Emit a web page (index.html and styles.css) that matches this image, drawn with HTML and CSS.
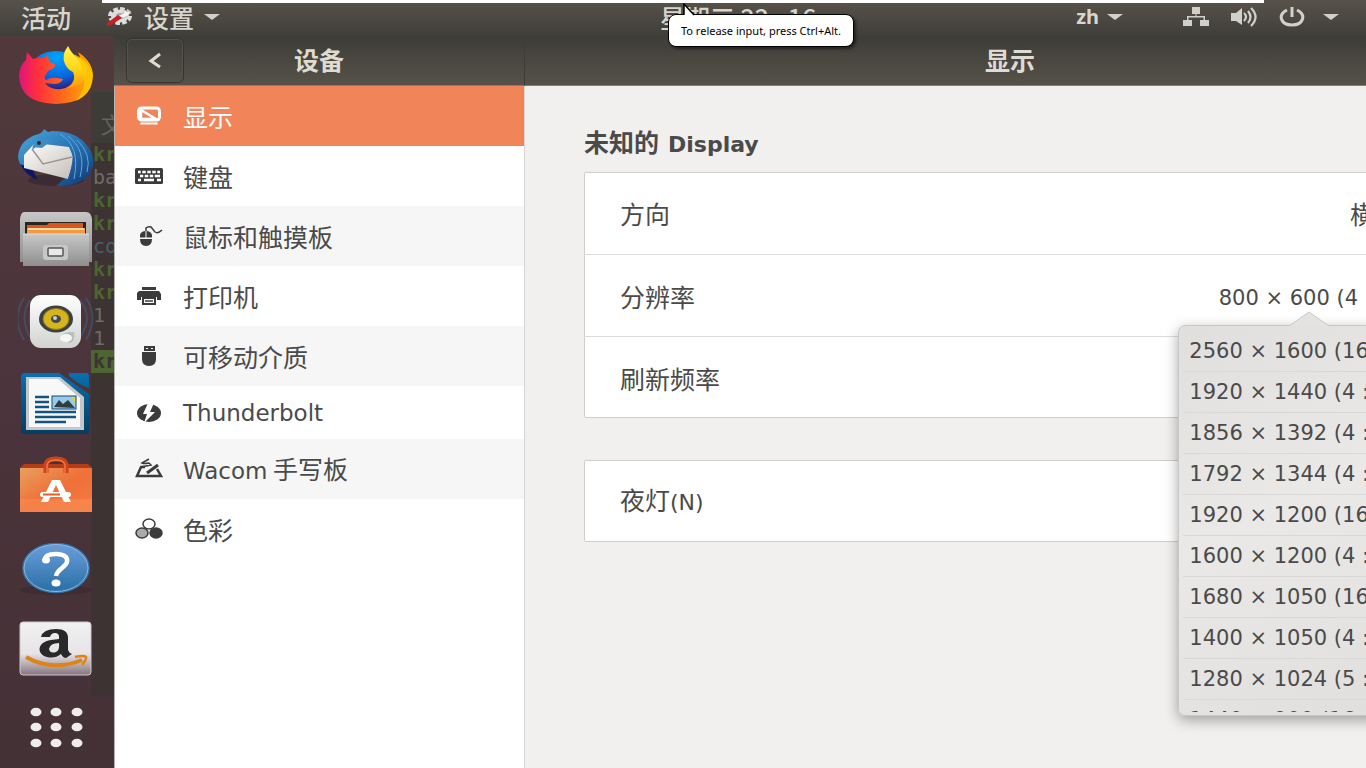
FILE: index.html
```html
<!DOCTYPE html>
<html lang="zh-CN">
<head>
<meta charset="utf-8">
<title>设置</title>
<link rel="stylesheet" href="styles.css">
</head>
<body>
<div class="desktop">
  <header class="topbar">
    <button class="activities">活动</button>
    <button class="app-menu">
      <svg width="28" height="20" viewBox="0 0 28 20"><ellipse cx="15" cy="9" rx="10" ry="7" fill="none" stroke="#dedede" stroke-width="4" stroke-dasharray="4.500 2.200"/><ellipse cx="15" cy="9" rx="9" ry="6.500" fill="#dedede"/><ellipse cx="15" cy="9" rx="4" ry="3" fill="#aaa8a4"/><path d="M13 9L19 6L19 2L22 5L26 4L23 9L18 11Z" fill="#f4f4f4" stroke="#999" stroke-width=".5"/><path d="M2 16L13 8L17 11L6 18Q1 20 2 16Z" fill="#c91f27"/></svg>
      <span>设置</span>
      <svg class="caret" width="16" height="8" viewBox="0 0 16 8"><path d="M0 1H16L8 7Z" fill="#d2d0ca"/></svg>
    </button>
    <time class="clock">星期三 22 : 16</time>
    <button class="lang"><span>zh</span><svg width="16" height="8" viewBox="0 0 16 8"><path d="M0 1H16L8 7Z" fill="#d2d0ca"/></svg></button>
    <button class="tray" aria-label="系统菜单">
      <svg width="26" height="20" viewBox="0 0 26 20" fill="#d2d0ca"><path d="M9 0H17V7H13.500V9H22V13H26V19H17V13H20.500V10.500H5.500V13H9V19H0V13H4V9H12.500V7H9Z"/></svg>
      <svg width="26" height="20" viewBox="0 0 26 20"><path d="M0 6H5L11 1V18L5 14H0Z" fill="#d2d0ca"/><path d="M13 6Q17 10 13 14M17 4Q22 10 17 16M20 1Q29 10 20 19" fill="none" stroke="#d2d0ca" stroke-width="2.2"/></svg>
      <svg width="26" height="20" viewBox="0 0 26 20"><path d="M8 3C-2 8 2 18 13 18S28 8 18 3M13 0V10" fill="none" stroke="#d2d0ca" stroke-width="3"/></svg>
      <svg class="caret" width="16" height="20" viewBox="0 0 16 20"><path d="M0 7H16L8 13Z" fill="#d2d0ca"/></svg>
    </button>
    <div class="host-edge"></div>
  </header>

  <div class="workspace">
    <div class="terminal" aria-hidden="true">
      <div class="terminal-bar">文</div>
      <div class="terminal-body">
        <b>kr</b><i>ba</i><b>kr</b><b>kr</b><i class="blue">co</i><b>kr</b><b>kr</b><i>1</i><i>1</i><b class="mark">kr</b>
      </div>
    </div>

    <nav class="dock" aria-label="Dock">
      <button aria-label="Firefox"><svg width="76" height="78" viewBox="0 0 76 78">
        <defs><radialGradient id="fb" cx=".5" cy=".15" r=".85"><stop offset="0" stop-color="#00a5fb"/><stop offset=".6" stop-color="#0867e0"/><stop offset="1" stop-color="#35146b"/></radialGradient><linearGradient id="fy" x1="0" y1="0" x2="0" y2="1"><stop offset="0" stop-color="#fff44f"/><stop offset=".5" stop-color="#ffd91c"/><stop offset="1" stop-color="#ff9b00"/></linearGradient><linearGradient id="fr" x1="0" y1="0" x2="1" y2="0"><stop offset="0" stop-color="#e0147c"/><stop offset=".25" stop-color="#ff2f3c"/><stop offset=".6" stop-color="#ff6a1c"/><stop offset="1" stop-color="#ffb400"/></linearGradient></defs>
        <ellipse cx="38" cy="34" rx="26" ry="20" fill="url(#fb)"/>
        <path d="M9 15L15 22Q20 20 25 21L30 18Q30 23 33 26L37 27Q38 31 30 34L28 37Q25 41 28 43Q33 40 39 41L45 42Q43 47 36 47L27 46Q32 53 43 52Q55 50 57 40Q57 33 53 28L62 20L60 15Q75 25 75 39Q74 66 38 67Q2 66 1 39Q1 29 8 23Z" fill="url(#fr)"/>
        <path d="M50 9Q43 18 47 27Q49 32 55 35Q59 43 50 51Q65 50 69 37Q70 28 62 22Q54 18 50 9Z" fill="url(#fy)"/><path d="M55 17Q70 22 74 37Q76 55 58 64Q70 50 65 34Q62 24 55 17Z" fill="#ffc800" opacity=".8"/></svg></button>
      <button aria-label="Thunderbird"><svg width="76" height="78" viewBox="0 0 76 78">
        <defs><linearGradient id="tb" x1="0" y1="0" x2="1" y2="1"><stop offset="0" stop-color="#4da6d8"/><stop offset=".5" stop-color="#2875b8"/><stop offset="1" stop-color="#103674"/></linearGradient><linearGradient id="te" x1="0" y1="0" x2="1" y2="1"><stop offset="0" stop-color="#fff"/><stop offset="1" stop-color="#c3beb5"/></linearGradient></defs>
        <ellipse cx="38" cy="61" rx="28" ry="6" fill="#30232a" opacity=".6"/>
        <path d="M17 16Q24 15 26 10L30 13Q50 10 64 21Q79 35 74 50Q66 65 38 67L48 58L12 48L20 61Q2 53 0 38Q1 22 17 16Z" fill="url(#tb)"/><path d="M2 45Q8 57 20 61L15 51L7 47Z" fill="#11175d"/>
        <path d="M6 36L17 24L51 28L56 40L50 60L6 49Z" fill="url(#te)"/><path d="M14 30L25 45L54 38" fill="none" stroke="#9b968e" stroke-width="1.5"/>
        <path d="M13 24Q25 11 40 16L52 24Q58 37 50 60L42 67Q78 65 74 39Q67 15 34 12L18 17Q5 22 1 38L8 28ZM27 21L14 31L16 24Z" fill="url(#tb)"/><path d="M14 28L24 29L33 22L25 19Z" fill="#3d8cc3"/><circle cx="21" cy="24" r="2" fill="#332b25"/><path d="M50 17Q69 31 62 58M42 15Q63 27 56 60M59 21Q74 35 69 53" fill="none" stroke="#61a9d9" stroke-width="1"/></svg></button>
      <button aria-label="文件"><svg width="76" height="78" viewBox="0 0 76 78">
        <defs><linearGradient id="fg" x1="0" y1="0" x2="0" y2="1"><stop offset="0" stop-color="#c7c7c7"/><stop offset="1" stop-color="#8e8e8e"/></linearGradient></defs>
        <path d="M6 11H68Q73 11 74 18V61H2V18Q3 11 6 11Z" fill="url(#fg)"/><path d="M7 21H68V36H7Z" fill="#292522"/><path d="M9 24H29L31 22H65V36H9Z" fill="#d75720"/><path d="M9 27H67V36H9Z" fill="#f39a3f"/><path d="M10 28H66" stroke="#fff1ce" stroke-width="1.5"/><path d="M5 33H71V65H5Z" fill="url(#fg)"/><path d="M5 33H71" stroke="#ddd"/><rect x="25" y="44" width="25" height="15" rx="3" fill="#c7c7c7"/><rect x="30" y="47" width="15" height="8" rx="1" fill="#e8e8e8" stroke="#555" stroke-width="1.5"/></svg></button>
      <button aria-label="Rhythmbox"><svg width="76" height="78" viewBox="0 0 76 78">
        <defs><linearGradient id="rg" x1="0" y1="0" x2="0" y2="1"><stop offset="0" stop-color="#fff"/><stop offset="1" stop-color="#d0d3d0"/></linearGradient></defs>
        <g fill="none" stroke="#435c86" stroke-width="2" opacity=".55"><path d="M12 17Q1 34 12 54M6 15Q-7 35 6 57M18 14Q5 34 18 57M62 17Q76 35 62 54M68 15Q81 34 68 57"/></g><rect x="12" y="12" width="51" height="53" rx="11" fill="url(#rg)"/><ellipse cx="38" cy="36" rx="17" ry="13.500" fill="#3b4143"/><ellipse cx="38" cy="36" rx="13" ry="10.5" fill="#d6b51c" stroke="#887719"/><ellipse cx="38" cy="36" rx="5" ry="4" fill="#444a4b"/><circle cx="37" cy="35" r="2" fill="#ccd1ca"/><path d="M44 55Q43 50 51 49H56Q58 59 51 60Z" fill="#bbc0bd"/><ellipse cx="48" cy="55" rx="6" ry="4" fill="#f6f6f3"/></svg></button>
      <button aria-label="LibreOffice Writer"><svg width="76" height="78" viewBox="0 0 76 78">
        <defs><linearGradient id="wr" x1="0" y1="0" x2="0" y2="1"><stop offset="0" stop-color="#0870b0"/><stop offset="1" stop-color="#053d60"/></linearGradient></defs>
        <path d="M7 8H41L71 29V67Q71 69 68 69H6Q3 69 3 66V12Q3 8 7 8ZM51 8H68Q71 8 71 12V23Q61 20 51 11Z" fill="url(#wr)"/><path d="M8 12H42L66 32V65H8Z" fill="#c5c6c7"/><path d="M11 14H40L62 33V62H11Z" fill="#f8f8f8"/><path d="M17 32H31M17 37H31M17 42H31M17 47H58M17 52H58M17 57H48" stroke="#175381" stroke-width="2.6"/><rect x="34" y="31" width="24" height="13" fill="#95cced" stroke="#174b70"/><path d="M36 42L41 35L45 39L50 35L57 43Z" fill="#323e3c"/><path d="M52 32H57V38Z" fill="#dfd23e"/></svg></button>
      <button aria-label="Ubuntu 软件"><svg width="76" height="78" viewBox="0 0 76 78">
        <defs><linearGradient id="sg" x1="0" y1="0" x2="1" y2="1"><stop offset="0" stop-color="#e8a05f"/><stop offset=".5" stop-color="#ef7038"/><stop offset="1" stop-color="#f47b43"/></linearGradient></defs>
        <path d="M2 21L6 17H70L74 21Z" fill="#b43d19"/><path d="M2 21H74V65H2Z" fill="url(#sg)"/><path d="M2 52H74V65H2Z" fill="#fa955a" opacity=".45"/><path d="M28 26V17Q29 12 38 12T48 17V26" fill="none" stroke="#cf4219" stroke-width="5"/><path d="M29 26V18Q30 13 38 13T47 18V26" fill="none" stroke="#ee7745" stroke-width="1.5"/><path d="M23 55L34 33H42L53 55H46L38 38L30 55Z" fill="#fff"/><rect x="22" y="45" width="31" height="5" rx="2.5" fill="#fff"/><path d="M25 47.5H42" stroke="#e65b24" stroke-width="2"/></svg></button>
      <button aria-label="帮助"><svg width="76" height="78" viewBox="0 0 76 78">
        <defs><linearGradient id="hg" x1="0" y1="0" x2="0" y2="1"><stop offset="0" stop-color="#6c9edb"/><stop offset="1" stop-color="#286ea5"/></linearGradient></defs><ellipse cx="38" cy="61" rx="36" ry="5" fill="#34262d" opacity=".4"/><ellipse cx="38" cy="39" rx="33" ry="24.5" fill="url(#hg)" stroke="#3473aa" stroke-width="1.5"/><ellipse cx="38" cy="39" rx="32" ry="23.5" fill="none" stroke="#8abae3"/><path d="M27 31C27 26 32 25 38 25C46 25 50 28 49 33C48 38 39 40 38 47" fill="none" stroke="#fff" stroke-width="4.500"/><ellipse cx="28" cy="31" rx="4" ry="3.5" fill="#fff"/><ellipse cx="38" cy="54" rx="4.5" ry="3.5" fill="#fff"/></svg></button>
      <button aria-label="Amazon"><svg width="76" height="78" viewBox="0 0 76 78">
        <defs><linearGradient id="ag" x1="0" y1="0" x2="0" y2="1"><stop offset="0" stop-color="#f2f1f2"/><stop offset=".6" stop-color="#e6e4e6"/><stop offset="1" stop-color="#87747f"/></linearGradient></defs><rect x="2" y="11" width="71" height="53" rx="3" fill="url(#ag)" stroke="#cbc8ca"/><path fill-rule="evenodd" d="M23 26Q25 18 38 18Q50 18 50 27V39Q51 42 54 43L48 47Q45 47 43 43Q37 48 29 46C19 44 18 31 33 29L41 28V26Q41 22 37 22Q33 22 32 26ZM41 32Q32 32 31 38Q32 43 38 41Q42 39 41 32Z" fill="#292929"/><path d="M8 46Q34 61 64 49" fill="none" stroke="#df8414" stroke-width="4"/><path d="M57 46Q66 44 68 46Q69 48 64 54" fill="none" stroke="#df8414" stroke-width="2.5"/></svg></button>
      <button aria-label="显示应用程序"><svg width="76" height="78" viewBox="0 0 76 78" fill="#eeedeb"><ellipse cx="18" cy="19" rx="5.5" ry="4.3"/><ellipse cx="38" cy="19" rx="5.5" ry="4.3"/><ellipse cx="59" cy="19" rx="5.5" ry="4.3"/><ellipse cx="18" cy="34" rx="5.5" ry="4.3"/><ellipse cx="38" cy="34" rx="5.5" ry="4.3"/><ellipse cx="59" cy="34" rx="5.5" ry="4.3"/><ellipse cx="18" cy="50" rx="5.5" ry="4.3"/><ellipse cx="38" cy="50" rx="5.5" ry="4.3"/><ellipse cx="59" cy="50" rx="5.5" ry="4.3"/></svg></button>
    </nav>

    <main class="window">
      <section class="sidebar">
        <header class="titlebar side-title"><button class="back" aria-label="返回"><svg width="14" height="18" viewBox="0 0 14 18"><path d="M12 2L3 9L12 15" fill="none" stroke="#dfdbd2" stroke-width="3"/></svg></button><h1>设备</h1></header>
        <nav class="panels" aria-label="设备">
          <a href="#display" class="active" aria-current="page"><svg width="28" height="22" viewBox="0 0 28 22"><rect x="3.500" y="3" width="21" height="12" rx="3" fill="none" stroke="#fff" stroke-width="3"/><path d="M6 5L21 14H6Z" fill="none" stroke="#fff" stroke-width="2.500"/><path d="M5.500 18.500H22.500" stroke="#fff" stroke-width="2"/></svg>显示</a>
          <a href="#keyboard"><svg width="28" height="22" viewBox="0 0 28 22"><rect y="3" width="28" height="16" rx="1.5" fill="#3b3b3b"/><path d="M3 7H25M5 11H25M3 15H6M9 15H19M22 15H26" stroke="#fff" stroke-width="2.5"/><path d="M6.500 5V9M11.500 5V9M16.500 5V9M21.500 5V9M9 9V13M14 9V13M19 9V13" stroke="#3b3b3b" stroke-width="1.5"/></svg>键盘</a>
          <a href="#mouse"><svg width="28" height="22" viewBox="0 0 28 22"><path d="M5 13V10Q6 6 11 6T17 10V13ZM5 14H17Q17 21 11 21T5 14" fill="#3b3b3b"/><path d="M11 6V13M4 13H18" stroke="#f6f6f6"/><path d="M11 6V3Q13 1 16 2L20 7Q23 9 27 5" fill="none" stroke="#3b3b3b" stroke-width="1.5"/></svg>鼠标和触摸板</a>
          <a href="#printers"><svg width="28" height="22" viewBox="0 0 28 22"><path d="M7 2H21V5H7ZM4 6H24L26 9V15H22V12H6V15H2V8Z" fill="#3b3b3b"/><path d="M8 13H20V19H8Z" fill="none" stroke="#3b3b3b" stroke-width="2"/><path d="M10 16H18" stroke="#3b3b3b" stroke-width="1.5"/></svg>打印机</a>
          <a href="#media"><svg width="28" height="22" viewBox="0 0 28 22" fill="#3b3b3b"><path d="M9 1H20V6H9ZM7 7H21V14Q21 21 14 21T7 14Z"/><path d="M11 3H13V4H11ZM16 3H18V4H16Z" fill="#fff"/></svg>可移动介质</a>
          <a href="#thunderbolt" class="latin"><svg width="28" height="22" viewBox="0 0 28 22"><ellipse cx="14" cy="11" rx="12" ry="9" fill="#3b3b3b"/><path d="M13 1L8 12H12L9 21L20 10H15L19 1Z" fill="#fff"/></svg>Thunderbolt</a>
          <a href="#wacom"><svg width="28" height="22" viewBox="0 0 28 22" fill="none" stroke="#3b3b3b"><path d="M10 9H6L2 18H26L22 11" stroke-width="2.5"/><path d="M12 15L23 7" stroke-width="3"/><path d="M14 1L7 5Q9 6 14 5L16 7L6 9" stroke-width="1.5"/></svg><span><span class="latin">Wacom</span> 手写板</span></a>
          <a href="#color"><svg width="28" height="22" viewBox="0 0 28 22" stroke="#3b3b3b" stroke-width="1.5"><ellipse cx="14" cy="6" rx="6" ry="5" fill="#fff"/><ellipse cx="7" cy="15" rx="6" ry="5" fill="#aaa"/><ellipse cx="21" cy="15" rx="6" ry="5" fill="#3b3b3b"/></svg>色彩</a>
        </nav>
      </section>
      <section class="content">
        <header class="titlebar main-title"><h1>显示</h1></header>
        <div class="settings">
          <h2>未知的 <span class="latin">Display</span></h2>
          <div class="card">
            <div class="row"><span>方向</span><span>横向</span></div>
            <div class="row"><span>分辨率</span><div class="resolution"><span class="numeric">800 × 600 (4 : 3)</span>
              <div class="popover">
                <svg class="tip" width="40" height="15" viewBox="0 0 40 15"><path d="M0 15L20 1L40 15" fill="#e4e3e1" stroke="#c9c7c5"/></svg>
                <ul class="numeric"><li>2560 × 1600 (16 : 10)</li><li>1920 × 1440 (4 : 3)</li><li>1856 × 1392 (4 : 3)</li><li>1792 × 1344 (4 : 3)</li><li>1920 × 1200 (16 : 10)</li><li>1600 × 1200 (4 : 3)</li><li>1680 × 1050 (16 : 10)</li><li>1400 × 1050 (4 : 3)</li><li>1280 × 1024 (5 : 4)</li><li>1440 × 900 (16 : 10)</li></ul>
              </div></div></div>
            <div class="row"><span>刷新频率</span></div>
          </div>
          <div class="card"><div class="row"><span>夜灯<span class="latin">(N)</span></span></div></div>
        </div>
      </section>
    </main>
  </div>
  <div class="tooltip" role="tooltip">To release input, press Ctrl+Alt.<svg class="pointer" width="14" height="13" viewBox="0 0 14 13"><path d="M2 13V1L12 12V13Z" fill="#fff"/><path d="M2 12V1L12 12" fill="none" stroke="#000" stroke-width="1.5"/></svg></div>
</div>
</body>
</html>
```
FILE: styles.css
```css
* { box-sizing: border-box; }
body {
  margin: 0;
  font: 25px/30px "Noto Sans CJK SC", sans-serif;
  color: #4a4a4a;
}
button { padding: 0; border: 0; background: none; color: inherit; font: inherit; }
svg { display: block; flex: none; }
h1, h2, ul { margin: 0; padding: 0; }
.latin { font-family: "DejaVu Sans", sans-serif; font-size: 22px; }
.numeric { font-family: "DejaVu Sans", sans-serif; font-size: 21px; white-space: nowrap; }
.desktop {
  position: relative;
  display: flex;
  flex-direction: column;
  height: 100vh;
  overflow: hidden;
  background: linear-gradient(#523a3b, #4b343b 50%, #443136);
}
.topbar {
  position: relative;
  display: flex;
  align-items: center;
  height: 36px;
  padding: 0 27px 3px 21px;
  background: linear-gradient(#57534a, #3f3e39);
  color: #d8d5ce;
  font-weight: 500;
}
.app-menu { display: flex; align-items: center; margin-left: 34px; }
.app-menu span { margin-left: 11px; }
.app-menu .caret { margin-left: 10px; }
.clock { flex: 1; padding-left: 180px; text-align: center; }
.lang { display: flex; align-items: center; gap: 8px; margin-right: 56px; padding-right: 4px; font: bold 20px/30px "Noto Sans", sans-serif; }
.tray { display: flex; align-items: center; gap: 22px; }
.tray .caret { margin-left: -4px; }
.host-edge {
  position: absolute;
  top: 0;
  left: 102px;
  right: 102px;
  height: 3px;
  background: #fff;
}
.workspace { position: relative; display: flex; flex: 1; min-height: 0; }
.terminal {
  position: absolute;
  top: 56px;
  left: 91px;
  width: 120px;
  height: 604px;
  background: #3c3332;
}
.terminal-bar { height: 51px; padding: 16px 0 0 10px; background: #3e3c37; color: #65635d; font-size: 22px; line-height: 30px; }
.terminal-body { display: flex; flex-direction: column; font: 20px/23px "DejaVu Sans Mono", monospace; }
.terminal-body i, .terminal-body b { padding-left: 2px; font-style: normal; color: #706a68; }
.terminal-body b { color: #4d6530; }
.terminal-body .blue { color: #485f70; }
.terminal-body .mark { background: #4d6530; color: #3c3332; }
.dock { position: relative; display: flex; flex-direction: column; gap: 4px; width: 114px; padding: 1px 0 0 18px; }
.dock button { width: 76px; height: 78px; }
.window { position: relative; display: flex; flex: 1; min-width: 0; margin-right: -129px; }
.sidebar { display: flex; flex-direction: column; width: 411px; flex: none; background: #fff; }
.content { flex: 1; min-width: 0; background: #f1f0ee; }
.titlebar {
  display: flex;
  align-items: center;
  justify-content: center;
  height: 50px;
  padding-bottom: 3px;
  background: linear-gradient(#3d3c37, #56524a);
  border-bottom: 1px solid #827d76;
  color: #dfdbd2;
}
.titlebar h1 { font-size: 25px; line-height: 30px; font-weight: 700; }
.side-title { position: relative; border-right: 1px solid #3d3c37; }
.back {
  position: absolute;
  left: 12px;
  top: 2px;
  display: flex;
  align-items: center;
  justify-content: center;
  width: 58px;
  height: 45px;
  border: 1px solid #35342f;
  border-radius: 6px;
  box-shadow: inset 0 0 0 1px #55524a;
}
.panels { display: flex; flex: 1; flex-direction: column; border-left: 1px solid #b5b2b0; border-right: 1px solid #d7d5d3; }
.panels a {
  display: flex;
  align-items: center;
  gap: 20px;
  height: 60px;
  padding-left: 20px;
  color: inherit;
  text-decoration: none;
}
.panels .latin { font-size: 23px; }
.panels a:nth-child(odd) { background: #f6f6f6; }
.panels a.latin { height: 53px; }
.panels a.active { background: #f28459; color: #fff; }
.settings { display: flex; flex-direction: column; padding: 40px 59px; }
h2 { display: flex; align-items: baseline; gap: 9px; height: 30px; margin-bottom: 16px; font-size: 25px; line-height: 30px; font-weight: 700; }
.card { margin-bottom: 42px; border-radius: 2px; background: #fff; box-shadow: inset 0 0 0 1px #cfcecc; }
.row { display: flex; align-items: center; justify-content: space-between; height: 82px; padding: 0 36px; }
.row + .row { border-top: 1px solid #dddcdb; }
.resolution { position: relative; }
.popover {
  position: absolute;
  top: 46px;
  left: 50%;
  width: 262px;
  margin-left: -131px;
  padding: 5px 4px 3px;
  border: 1px solid #c9c7c5;
  border-radius: 7px;
  background: linear-gradient(155deg, #e0dfdd, #eae9e8 45%, #dfdedc);
  box-shadow: 0 4px 14px rgba(0, 0, 0, 0.35);
}
.popover ul { height: 381px; overflow: hidden; list-style: none; }
.popover li { height: 41px; padding-left: 6px; line-height: 40px; border-bottom: 1px solid #d9d8d6; }
.tip { position: absolute; top: -15px; left: 110px; }
.tooltip {
  position: absolute;
  top: 14px;
  left: 668px;
  padding: 7px 12px;
  border: 1px solid #000;
  border-radius: 8px;
  background: #fff;
  box-shadow: 2px 2px 3px rgba(0, 0, 0, 0.5);
  color: #000;
  font: 11px/17px "Noto Sans", sans-serif;
  white-space: nowrap;
}
.pointer { position: absolute; top: -12px; left: 13px; }
```
